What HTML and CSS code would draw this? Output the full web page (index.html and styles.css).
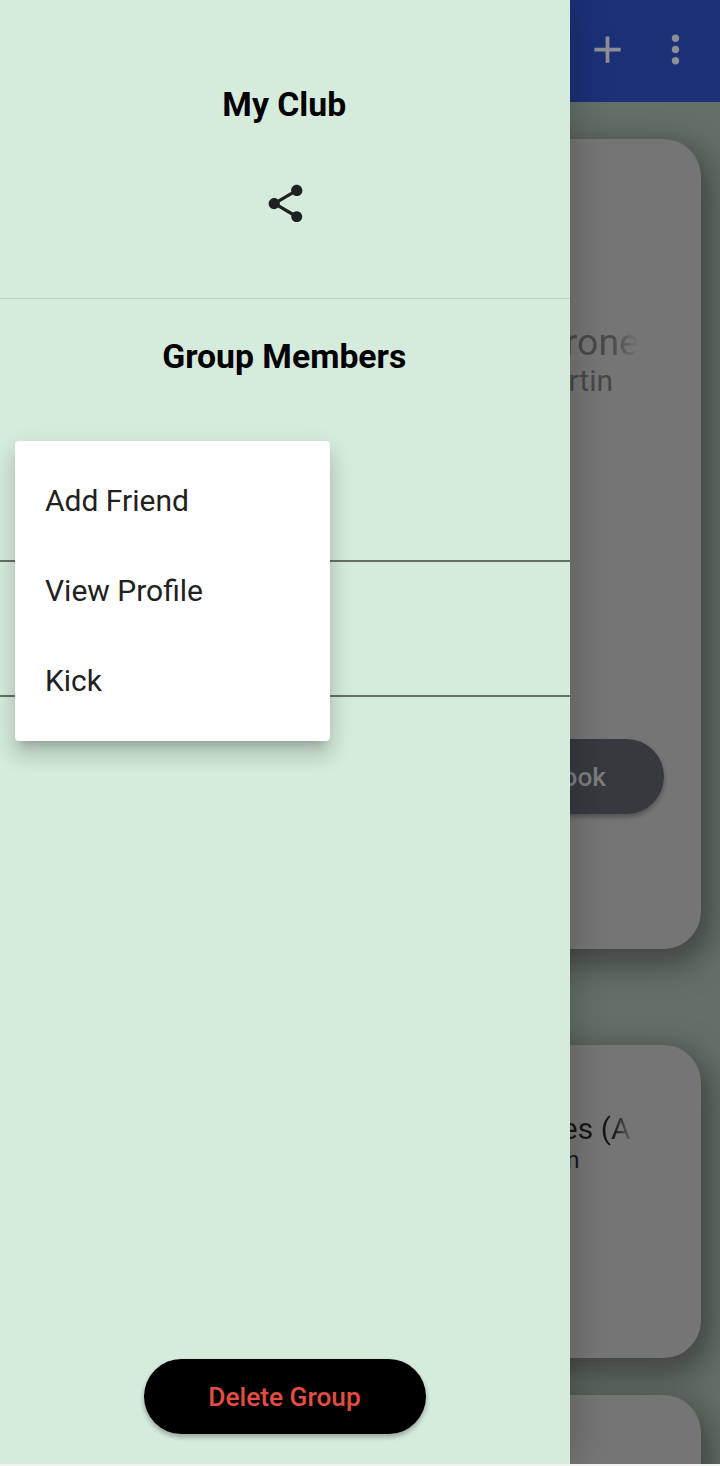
FILE: index.html
```html
<!DOCTYPE html>
<html lang="en">
<head>
<meta charset="utf-8">
<title>My Club</title>
<link rel="stylesheet" href="styles.css">
</head>
<body>
<div class="screen">
  <div class="page">
    <header class="appbar">
      <svg class="icon" viewBox="0 0 24 24"><path d="M19 13h-6v6h-2v-6H5v-2h6V5h2v6h6v2z"/></svg>
      <svg class="icon" viewBox="0 0 24 24"><path d="M12 8c1.1 0 2-.9 2-2s-.9-2-2-2-2 .9-2 2 .9 2 2 2zm0 2c-1.1 0-2 .9-2 2s.9 2 2 2 2-.9 2-2-.9-2-2-2zm0 6c-1.1 0-2 .9-2 2s.9 2 2 2 2-.9 2-2-.9-2-2-2z"/></svg>
    </header>
    <main class="cards">
      <article class="card card-current">
        <p class="title fade">rone</p>
        <p class="author">rtin</p>
        <div class="pill book">ook</div>
      </article>
      <article class="card card-next">
        <p class="subtitle fade-short">es (A</p>
        <p class="small-author">n</p>
      </article>
      <article class="card card-last"></article>
    </main>
  </div>
  <aside class="drawer">
    <section class="drawer-head">
      <h1 class="heading">My Club</h1>
      <svg class="share" viewBox="0 0 24 24"><path d="M18 16.08c-.76 0-1.44.3-1.96.77L8.91 12.7c.05-.23.09-.46.09-.7s-.04-.47-.09-.7l7.05-4.11c.54.5 1.25.81 2.04.81 1.66 0 3-1.34 3-3s-1.34-3-3-3-3 1.34-3 3c0 .24.04.47.09.7L8.04 9.81C7.5 9.31 6.79 9 6 9c-1.66 0-3 1.34-3 3s1.34 3 3 3c.79 0 1.5-.31 2.04-.81l7.12 4.16c-.05.21-.08.43-.08.65 0 1.61 1.31 2.92 2.92 2.92s2.92-1.31 2.92-2.92-1.31-2.92-2.92-2.92z"/></svg>
    </section>
    <h2 class="heading members-title">Group Members</h2>
    <div class="member member-first"></div>
    <div class="member"></div>
    <div class="drawer-foot"><button class="pill delete">Delete Group</button></div>
    <nav class="menu">
      <div class="menu-item">Add Friend</div>
      <div class="menu-item">View Profile</div>
      <div class="menu-item">Kick</div>
    </nav>
  </aside>
</div>
</body>
</html>
```
FILE: styles.css
```css
* { box-sizing: border-box; margin: 0; }
body { background: #f1f3f1; font-family: Roboto, "Noto Sans", sans-serif; }
.screen { position: relative; width: 720px; height: 1464px; overflow: hidden; }

.page { height: 100%; display: flex; flex-direction: column; background: #647067; }
.appbar {
  flex: none; height: 102px; padding: 0 22.5px 4px 0;
  display: flex; justify-content: flex-end; align-items: center; gap: 22.5px;
  background: #1b3077;
}
.icon { width: 45px; height: 45px; fill: #8e8f94; }
.cards { display: flex; flex-direction: column; padding: 37.4px 19px 0; }
.card {
  flex: none; border-radius: 37.5px; background: #757575;
  box-shadow: 5px 11px 30px 6px rgba(52, 54, 52, .72);
  display: flex; flex-direction: column; align-items: flex-end;
}
.card-current { height: 810px; padding: 180.6px 37px 0 0; }
.card-next { height: 313px; margin-top: 96px; padding-top: 65.6px; }
.card-last { height: 313px; margin-top: 37px; }
.title { margin-right: 25px; font-size: 37.5px; line-height: 44px; }
.author { margin-right: 51px; font-size: 30px; line-height: 34px; color: #484848; }
.fade {
  color: transparent; background: linear-gradient(90deg, #484848 62%, #757575 100%);
  background-clip: text; -webkit-background-clip: text;
}
.subtitle { margin-right: 70.5px; font-size: 30px; line-height: 35px; }
.fade-short {
  color: transparent; background: linear-gradient(90deg, #161616 72%, #606060 100%);
  background-clip: text; -webkit-background-clip: text;
}
.small-author { margin-right: 121.5px; font-size: 24px; line-height: 28px; color: #161616; }

.pill {
  height: 75px; border: 0; border-radius: 38px;
  display: flex; align-items: center; justify-content: center;
  font: 500 26.25px Roboto, sans-serif;
  box-shadow: 0 3px 5px rgba(0, 0, 0, .3);
}
.book {
  width: 200px; margin-top: 341.4px; padding-right: 58px; justify-content: flex-end;
  background: #363a3f; color: #7c7c7c;
}

.drawer {
  position: absolute; left: 0; top: 0; width: 570px; height: 100%;
  display: flex; flex-direction: column; background: #d5ebdc;
  box-shadow: 0 0 36px rgba(0, 0, 0, .24);
}
.drawer-head {
  height: 299px; padding-top: 85px; border-bottom: 1px solid #bed3c5;
  display: flex; flex-direction: column; align-items: center;
}
.heading { padding-right: 1.5px; font-size: 33.75px; line-height: 40px; font-weight: 700; color: #000; text-align: center; }
.share { width: 45px; height: 45px; margin: 56px 0 0; fill: #1d211f; }
.members-title { margin-top: 38px; }
.member { height: 135px; border-bottom: 2px solid #657069; }
.member-first { height: 185px; }
.drawer-foot { margin-top: auto; padding: 0 0 30px; display: flex; justify-content: center; }
.delete { width: 282px; padding: 0 7px 0 6px; background: #000; color: #e34d43; }

.menu {
  position: absolute; left: 15px; top: 441px; width: 315px; height: 300px;
  padding: 15px 0; border-radius: 4px; background: #fff;
  box-shadow: 0 9px 9px -6px rgba(0, 0, 0, .2), 0 15px 19px 2px rgba(0, 0, 0, .12), 0 6px 26px 4px rgba(0, 0, 0, .06);
}
.menu-item { height: 90px; padding-left: 30px; font-size: 30px; line-height: 90px; color: #212121; }
```
